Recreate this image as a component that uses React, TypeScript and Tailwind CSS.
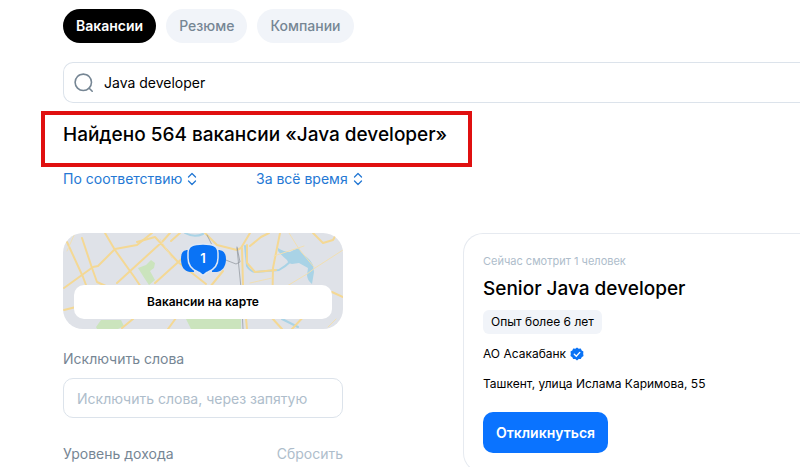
import React from "react";
import clsx from "clsx";

interface TabProps {
  label: string;
  active?: boolean;
}

const Tab: React.FC<TabProps> = ({ label, active }) => (
  <button
    type="button"
    className={clsx(
      "h-[34px] rounded-full px-[13px] text-sm",
      active
        ? "bg-black font-semibold text-white"
        : "bg-[#f1f4f9] font-medium text-[#768694]"
    )}
  >
    {label}
  </button>
);

const SortButton: React.FC<{ label: string }> = ({ label }) => (
  <button
    type="button"
    className="flex items-center gap-1 text-sm text-[#2478d4]"
  >
    {label}
    <svg
      className="h-4 w-3"
      viewBox="0 0 12 16"
      fill="none"
      stroke="currentColor"
      strokeWidth="1.3"
      strokeLinecap="round"
      strokeLinejoin="round"
    >
      <path d="M2.5 6L6 2.5 9.500 6M2.500 10L6 13.500 9.500 10" />
    </svg>
  </button>
);

const CityMap = () => (
  <svg
    className="absolute inset-0 h-full w-full"
    viewBox="0 0 280 96"
    preserveAspectRatio="xMidYMid slice"
    fill="none"
    strokeLinejoin="round"
    strokeLinecap="round"
  >
    <rect width="280" height="96" fill="#dfe2e8" />
    {/* parks */}
    <g fill="#cbe4bd">
      <path d="M75 35l8-3 5-5 4 3-1 5-4 3 5 9-6 5-6-9z" />
      <path d="M33 94l5-7h20l3 6-6 3H34zM123 86h55v10h-50z" />
    </g>
    {/* water */}
    <path
      d="M215 15q6 4 12 4 5-3 9-4 2 5 5 7 6 4 9 10l1 7-2 12q-5-4-5-9l1-7-9-5-7 1q-4-1-5-4-5-4-9-9z"
      fill="#a9d3e6"
    />
    <path
      d="M228 28q-5 5-12 9l-24 2q-5-1-8-6l-2-20M219 86l16 8M122 0q9 5 18 1"
      stroke="#a9d3e6"
      strokeWidth="2"
    />
    {/* roads */}
    <g stroke="#f4d894" strokeWidth="2">
      <path d="M4 9l16 35 6 16M19 5l10 30 5 14 11 5" />
      <path d="M1 55l29-21 5-1 17-17 22-4L89 0M42 0l10 17 20 28 8 12" />
      <path d="M54 50L99 9l8-9M74 9l18-5 23 25 28 22M92 50l31-28M1 77l12-3" />
      <path d="M59 95l11-9M105 96l8-11M117 0l-9 8" />
      <path d="M142 0l12 12 20 5 4-2 9-15M179 15l1 37 4 44M184 12v18l8 9 21-2" />
      <path d="M217 0l-7 35-1 50 10 11M187 13l11-9 8-4M250 0l10 10 10-3 4-7" />
      <path d="M269 59l11 5M229 96l16-17M147 54l13-16" />
    </g>
    <g stroke="#f1dfb2" strokeWidth="1">
      <path d="M252 35l28-18M252 35l-8 6-20 12M226 0l10 16 15 18M211 23l30-10M187 50l22-5M265 94l8-8" />
      <path d="M12 0L4 18M97 6l12 19" />
    </g>
    <path
      d="M144 2l11 22 18 7 4-2-3-15M174 15l4 40 2 41"
      stroke="#8d9299"
      strokeWidth="0.7"
    />
    {/* vacancy pins */}
    <path
      d="M125 17c-5 0-7 3-7 9 0 8 3 12 9 13h4V17zM155 17c5 0 8 3 8 9 0 8-4 12-9 13h-5V17z"
      fill="#0a73f5"
    />
    <path
      d="M140 11c10 0 15 2 15 9v5c0 8-5 12-10 14-3 1-3 3-5 3s-2-2-5-3c-5-2-10-6-10-14v-5c0-7 5-9 15-9z"
      fill="#0a73f5"
      stroke="#dfe8f5"
      strokeWidth="1.5"
    />
    <text
      x="140"
      y="30"
      textAnchor="middle"
      className="fill-white text-[13px] font-semibold"
    >
      1
    </text>
  </svg>
);

const VerifiedIcon = () => (
  <svg className="h-[14px] w-[14px]" viewBox="0 0 14 14">
    <path
      d="M7 .5l1.700 1.200 2.100-.200.900 1.900 1.700 1.200L13.200 6.800l.300 2.100-1.800 1.300-.900 1.900-2.100-.100L7 13.500l-1.700-1.500-2.100.100-.900-1.900L.5 8.900l.300-2.100L.5 4.600l1.800-1.200.900-1.900 2.100.200z"
      fill="#0a73f5"
    />
    <path
      d="M4.300 7.300l2 1.900 3.500-3.800"
      fill="none"
      stroke="#fff"
      strokeWidth="1.4"
      strokeLinecap="round"
    />
  </svg>
);

const Filters = () => (
  <aside className="w-[280px] shrink-0">
    <div className="relative flex h-24 items-end overflow-hidden rounded-[20px] px-[11px] pb-[10px]">
      <CityMap />
      <button
        type="button"
        className="relative h-[34px] w-full rounded-[10px] bg-white text-xs font-semibold text-black"
      >
        Вакансии на карте
      </button>
    </div>

    <label
      htmlFor="exclude"
      className="mt-5 block text-sm leading-5 text-[#768694]"
    >
      Исключить слова
    </label>
    <input
      id="exclude"
      type="text"
      placeholder="Исключить слова, через запятую"
      className="mt-[9px] h-10 w-full rounded-[10px] border border-[#dce3eb] px-[13px] text-sm placeholder:text-[#aebdcb] focus:outline-none"
    />

    <div className="mt-[26px] flex items-center justify-between text-sm leading-5">
      <h2 className="text-[#768694]">Уровень дохода</h2>
      <button type="button" className="text-[#aebdcb]">
        Сбросить
      </button>
    </div>
  </aside>
);

const VacancyCard = () => (
  <article className="flex-1 rounded-l-[20px] border border-r-0 border-[#e6eaf0] px-[19px] pt-[17px] pb-[19px]">
    <p className="text-[11px] leading-5 text-[#aebdcb]">
      Сейчас смотрит 1 человек
    </p>
    <h2 className="mt-1 text-[19px] leading-7 font-medium text-black">
      Senior Java developer
    </h2>
    <p className="mt-[7px] w-fit rounded-md bg-[#f1f4f9] px-2 text-xs leading-6 text-black">
      Опыт более 6 лет
    </p>
    <div className="mt-[10px] flex items-center gap-1 text-xs leading-5 text-black">
      <span>АО Асакабанк</span>
      <VerifiedIcon />
    </div>
    <p className="mt-[10px] text-xs leading-5 text-black">
      Ташкент, улица Ислама Каримова, 55
    </p>
    <button
      type="button"
      className="mt-[18px] h-[41px] rounded-[10px] bg-[#0a73ff] px-[13px] text-sm font-semibold text-white"
    >
      Откликнуться
    </button>
  </article>
);

export default function App() {
  return (
    <div className="min-h-screen overflow-hidden bg-white pt-[9px] pl-[63px] font-[Inter,'Liberation_Sans',sans-serif]">
      <nav className="flex gap-[10px]">
        <Tab label="Вакансии" active />
        <Tab label="Резюме" />
        <Tab label="Компании" />
      </nav>

      {/* search */}
      <label className="mt-[19px] flex h-[41px] items-center gap-[10px] rounded-l-[10px] border border-r-0 border-[#dce3eb] pl-[10px]">
        <svg
          className="h-5 w-5 shrink-0"
          viewBox="0 0 20 20"
          fill="none"
          stroke="#768694"
          strokeWidth="1.6"
          strokeLinecap="round"
        >
          <circle cx="9.3" cy="9.3" r="8.2" />
          <path d="M15.2 15.2l3 3" />
        </svg>
        <input
          type="search"
          aria-label="Поиск"
          defaultValue="Java developer"
          className="w-full text-sm text-black focus:outline-none"
        />
      </label>

      {/* result count */}
      <div className="mt-2 -ml-[22px] h-14 w-[431px] border-4 border-[#e01010] pt-[6px] pl-[18px]">
        <h1 className="text-[19px] leading-7 font-medium whitespace-nowrap text-black">
          Найдено 564 вакансии «Java developer»
        </h1>
      </div>

      <div className="mt-[2px] flex h-5">
        <div className="w-[193px]">
          <SortButton label="По соответствию" />
        </div>
        <SortButton label="За всё время" />
      </div>

      <main className="mt-11 flex gap-[120px]">
        <Filters />
        <VacancyCard />
      </main>
    </div>
  );
}
